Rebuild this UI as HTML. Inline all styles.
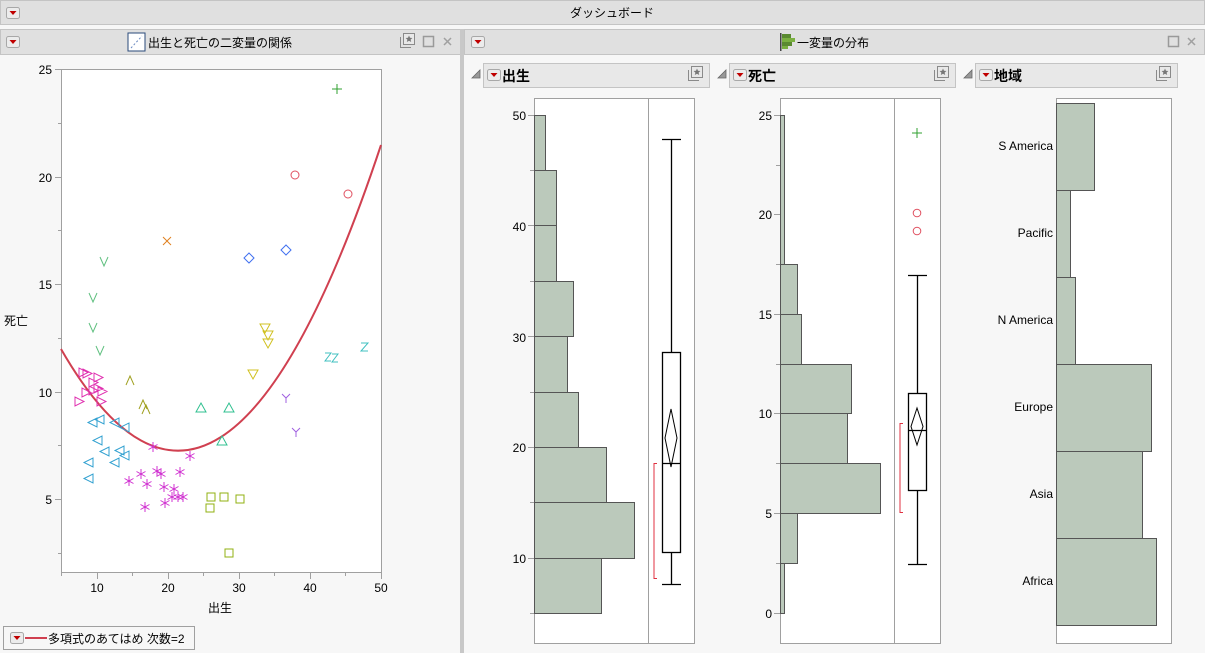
<!DOCTYPE html>
<html><head><meta charset="utf-8"><style>
html,body{margin:0;padding:0;background:#f7f7f7;width:1205px;height:653px;overflow:hidden}
svg{display:block}
text{font-family:"Liberation Sans","Noto Sans CJK JP",sans-serif;font-size:12px;fill:#000}
</style></head><body>
<svg width="1205" height="653" viewBox="0 0 1205 653" xmlns="http://www.w3.org/2000/svg">
<defs>
<g id="dd"><rect x="0.5" y="0.5" width="13" height="11" rx="2" fill="#ececec" stroke="#a8a8a8"/><path d="M3.5 4 L10.5 4 L7 8 Z" fill="#c00000"/></g>
<g id="pin"><rect x="3.5" y="0.5" width="11" height="11" fill="#e8e8e8" stroke="#8a8a8a"/><path d="M0.5 4 V14.5 H11" fill="none" stroke="#8a8a8a"/><path d="M9 2.5 l1 2.3 2.4.2-1.8 1.6.6 2.4-2.2-1.3-2.2 1.3.6-2.4-1.8-1.6 2.4-.2z" fill="#777"/></g>
<path id="tri" d="M0 8 L8 0 L8 8 Z" fill="#999" stroke="#666" stroke-width="0.8"/>
</defs>
<!-- top bar -->
<rect x="0.5" y="0.5" width="1204" height="24" fill="#e0e0e0" stroke="#c4c4c4"/>
<use href="#dd" x="6" y="7"/>
<text x="612" y="17" text-anchor="middle">ダッシュボード</text>
<!-- left panel header -->
<rect x="0.5" y="29.5" width="460" height="25" fill="#e0e0e0" stroke="#c4c4c4"/>
<use href="#dd" x="6" y="36"/>
<rect x="128" y="33" width="17" height="18" fill="#fff" stroke="#2a4a7a"/>
<path d="M131 48 l11-12" stroke="#6a8ac0" stroke-width="1" stroke-dasharray="2 2"/>
<text x="148" y="47">出生と死亡の二変量の関係</text>
<use href="#pin" x="400" y="33"/>
<rect x="423.5" y="36.5" width="10" height="10" fill="none" stroke="#9a9a9a" stroke-width="1.5"/>
<path d="M444 38 l7 7 M451 38 l-7 7" stroke="#a0a0a0" stroke-width="1.5"/>
<!-- splitter -->
<rect x="460" y="29" width="4" height="624" fill="#c8c8c8"/>
<!-- right panel header -->
<rect x="464.5" y="29.5" width="740" height="25" fill="#e0e0e0" stroke="#c4c4c4"/>
<use href="#dd" x="471" y="36"/>
<rect x="780" y="33" width="1.5" height="18" fill="#444"/>
<rect x="782" y="34" width="9" height="4" fill="#5a8a30"/><rect x="782" y="38" width="13" height="4" fill="#7ab040"/><rect x="782" y="42" width="10" height="4" fill="#5a8a30"/><rect x="782" y="46" width="6" height="3" fill="#7ab040"/>
<text x="797" y="47">一変量の分布</text>
<rect x="1168.5" y="36.5" width="10" height="10" fill="none" stroke="#9a9a9a" stroke-width="1.5"/>
<path d="M1188 38 l7 7 M1195 38 l-7 7" stroke="#a0a0a0" stroke-width="1.5"/>

<!-- sub headers -->
<use href="#tri" x="472" y="70"/>
<rect x="483.5" y="63.5" width="226" height="24" fill="#e8e8e8" stroke="#c4c4c4"/>
<use href="#dd" x="487" y="69"/>
<text x="502" y="81" style="font-weight:bold;font-size:14px">出生</text>
<use href="#pin" x="688" y="66"/>
<use href="#tri" x="718" y="70"/>
<rect x="729.5" y="63.5" width="226" height="24" fill="#e8e8e8" stroke="#c4c4c4"/>
<use href="#dd" x="733" y="69"/>
<text x="748" y="81" style="font-weight:bold;font-size:14px">死亡</text>
<use href="#pin" x="934" y="66"/>
<use href="#tri" x="964" y="70"/>
<rect x="975.5" y="63.5" width="202" height="24" fill="#e8e8e8" stroke="#c4c4c4"/>
<use href="#dd" x="979" y="69"/>
<text x="994" y="81" style="font-weight:bold;font-size:14px">地域</text>
<use href="#pin" x="1156" y="66"/>

<!-- scatter plot -->
<rect x="61.5" y="69.5" width="320" height="503" fill="#fff" stroke="#a0a0a0"/>
<g stroke="#a0a0a0">
<path d="M55 69.5h6 M55 177.5h6 M55 284.5h6 M55 392.5h6 M55 499.5h6 M58 123.5h3 M58 230.5h3 M58 338.5h3 M58 445.5h3 M58 553.5h3"/>
<path d="M97.5 573v6 M168.5 573v6 M239.5 573v6 M310.5 573v6 M381.5 573v6 M61.5 573v3 M132.5 573v3 M203.5 573v3 M274.5 573v3 M345.5 573v3"/>
</g>
<g text-anchor="end"><text x="52" y="74">25</text><text x="52" y="182">20</text><text x="52" y="289">15</text><text x="52" y="397">10</text><text x="52" y="504">5</text></g>
<g text-anchor="middle"><text x="97" y="592">10</text><text x="168" y="592">20</text><text x="239" y="592">30</text><text x="310" y="592">40</text><text x="381" y="592">50</text><text x="220" y="612">出生</text></g>
<text x="4" y="325">死亡</text>
<path d="M61 349 Q221 627 381 145" fill="none" stroke="#d04050" stroke-width="2"/>
<g fill="none" stroke-width="1">
<path d="M332 89h10M337 84v10" stroke="#30a030"/>
<circle cx="295" cy="175" r="4" stroke="#e05060"/><circle cx="348" cy="194" r="4" stroke="#e05060"/>
<path d="M163 237l8 8M171 237l-8 8" stroke="#e08020"/>
<path d="M249 253l5 5-5 5-5-5z M286 245l5 5-5 5-5-5z" stroke="#4070f0"/>
<g stroke="#60c080"><path d="M100 257l4 9 4-9M89 293l4 9 4-9M89 323l4 9 4-9M96 346l4 9 4-9"/></g>
<g stroke="#d0c020"><path d="M260 324h10l-5 9z M263 331h10l-5 9z M263 339h10l-5 9z M248 370h10l-5 9z"/></g>
<g stroke="#40c0c0"><path d="M325 353h6l-6 8h6 M332 354h6l-6 8h6 M361 343h7l-7 8h7"/></g>
<g stroke="#a060e0"><path d="M282 394l4 4 4-4M286 398v5 M292 428l4 4 4-4M296 432v5"/></g>
<g stroke="#a0a020"><path d="M126 385l4-9 4 9 M139 409l4-9 4 9 M142 414l4-9 4 9"/></g>
<g stroke="#30c090"><path d="M196 412h10l-5-9z M224 412h10l-5-9z M217 445h10l-5-9z"/></g>
<g stroke="#e030b0"><path d="M79 368v9l9-4.5z M83 369v9l9-4.5z M94 373v9l9-4.5z M89 378v9l9-4.5z M94 384v9l9-4.5z M82 388v9l9-4.5z M89 386v9l9-4.5z M98 387v9l9-4.5z M75 397v9l9-4.5z M97 397v9l9-4.5z"/></g>
<g stroke="#30a0d0"><path d="M97 418v9l-9-4.5z M104 415v9l-9-4.5z M119 418v9l-9-4.5z M129 423v9l-9-4.5z M102 436v9l-9-4.5z M109 447v9l-9-4.5z M124 446v9l-9-4.5z M129 451v9l-9-4.5z M93 458v9l-9-4.5z M119 458v9l-9-4.5z M93 474v9l-9-4.5z"/></g>
<g stroke="#d030d0" id="ast"></g>
<g stroke="#90b010"><path d="M207 493h8v8h-8z M220 493h8v8h-8z M236 495h8v8h-8z M206 504h8v8h-8z M225 549h8v8h-8z"/></g>
</g>
<g stroke="#d030d0" stroke-width="1">
<path d="M153 442v10M148.5 444.5l9 5M148.5 449.5l9-5 M190 451v10M185.5 453.5l9 5M185.5 458.5l9-5 M141 469v10M136.5 471.5l9 5M136.5 476.5l9-5 M157 466v10M152.5 468.5l9 5M152.5 473.5l9-5 M161 469v10M156.5 471.5l9 5M156.5 476.5l9-5 M180 467v10M175.5 469.5l9 5M175.5 474.5l9-5 M129 476v10M124.5 478.5l9 5M124.5 483.5l9-5 M147 479v10M142.5 481.5l9 5M142.5 486.5l9-5 M164 482v10M159.5 484.5l9 5M159.5 489.5l9-5 M174 484v10M169.5 486.5l9 5M169.5 491.5l9-5 M172 492v10M167.5 494.5l9 5M167.5 499.5l9-5 M178 492v10M173.5 494.5l9 5M173.5 499.5l9-5 M183 492v10M178.5 494.5l9 5M178.5 499.5l9-5 M165 498v10M160.5 500.5l9 5M160.5 505.5l9-5 M145 502v10M140.5 504.5l9 5M140.5 509.5l9-5"/>
</g>
<!-- legend -->
<rect x="3.5" y="626.5" width="191" height="23" fill="#f7f7f7" stroke="#a0a0a0"/>
<use href="#dd" x="10" y="632"/>
<path d="M25 638h22" stroke="#d04050" stroke-width="2"/>
<text x="48" y="643">多項式のあてはめ 次数=2</text>

<!-- Birth distribution -->
<rect x="534.5" y="98.5" width="160" height="545" fill="#fff" stroke="#a0a0a0"/>
<path d="M648.5 99v544" stroke="#a0a0a0"/>
<g fill="#bbc9bb" stroke="#555" stroke-width="1">
<rect x="534.5" y="115.5" width="11" height="55"/>
<rect x="534.5" y="170.5" width="22" height="55"/>
<rect x="534.5" y="225.5" width="22" height="56"/>
<rect x="534.5" y="281.5" width="39" height="55"/>
<rect x="534.5" y="336.5" width="33" height="56"/>
<rect x="534.5" y="392.5" width="44" height="55"/>
<rect x="534.5" y="447.5" width="72" height="55"/>
<rect x="534.5" y="502.5" width="100" height="56"/>
<rect x="534.5" y="558.5" width="67" height="55"/>
</g>
<g stroke="#a0a0a0"><path d="M528 115.5h6M530 170.5h4M528 225.5h6M530 281.5h4M528 336.5h6M530 392.5h4M528 447.5h6M530 502.5h4M528 558.5h6M530 613.5h4"/></g>
<g text-anchor="end"><text x="526" y="120">50</text><text x="526" y="231">40</text><text x="526" y="342">30</text><text x="526" y="452">20</text><text x="526" y="563">10</text></g>
<g fill="none" stroke="#000" stroke-width="1.3">
<path d="M671.5 139v213 M671.5 552v32 M662 139.5h19 M662 584.5h19"/>
<rect x="662.5" y="352.5" width="18" height="200"/>
<path d="M662 463.5h19"/>
<path d="M671 409l-6 29 6 29 6-29z" stroke-width="1"/>
</g>
<path d="M657 463.5h-3v115h3" fill="none" stroke="#e03040"/>

<!-- Death distribution -->
<rect x="780.5" y="98.5" width="160" height="545" fill="#fff" stroke="#a0a0a0"/>
<path d="M894.5 99v544" stroke="#a0a0a0"/>
<g fill="#bbc9bb" stroke="#555" stroke-width="1">
<rect x="780.5" y="115.5" width="4" height="149"/>
<rect x="780.5" y="264.5" width="17" height="50"/>
<rect x="780.5" y="314.5" width="21" height="50"/>
<rect x="780.5" y="364.5" width="71" height="49"/>
<rect x="780.5" y="413.5" width="67" height="50"/>
<rect x="780.5" y="463.5" width="100" height="50"/>
<rect x="780.5" y="513.5" width="17" height="50"/>
<rect x="780.5" y="563.5" width="4" height="50"/>
</g>
<g stroke="#a0a0a0"><path d="M774 115.5h6M776 165.5h4M774 214.5h6M776 264.5h4M774 314.5h6M776 364.5h4M774 413.5h6M776 463.5h4M774 513.5h6M776 563.5h4M774 613.5h6"/></g>
<g text-anchor="end"><text x="772" y="120">25</text><text x="772" y="219">20</text><text x="772" y="319">15</text><text x="772" y="418">10</text><text x="772" y="518">5</text><text x="772" y="618">0</text></g>
<path d="M912 133h10M917 128v10" stroke="#30a030" fill="none"/>
<circle cx="917" cy="213" r="3.8" fill="none" stroke="#e05060"/>
<circle cx="917" cy="231" r="3.8" fill="none" stroke="#e05060"/>
<g fill="none" stroke="#000" stroke-width="1.3">
<path d="M917.5 276v117 M917.5 490v74 M908 275.5h19 M908 564.5h19"/>
<rect x="908.5" y="393.5" width="18" height="97"/>
<path d="M908 430.5h19"/>
<path d="M917 408l-6 18.5 6 18.5 6-18.5z" stroke-width="1"/>
</g>
<path d="M903 423.5h-3v89h3" fill="none" stroke="#e03040"/>

<!-- Region -->
<rect x="1056.5" y="98.5" width="115" height="545" fill="#fff" stroke="#a0a0a0"/>
<g fill="#bbc9bb" stroke="#555" stroke-width="1">
<rect x="1056.5" y="103.5" width="38" height="87"/>
<rect x="1056.5" y="190.5" width="14" height="87"/>
<rect x="1056.5" y="277.5" width="19" height="87"/>
<rect x="1056.5" y="364.5" width="95" height="87"/>
<rect x="1056.5" y="451.5" width="86" height="87"/>
<rect x="1056.5" y="538.5" width="100" height="87"/>
</g>
<g text-anchor="end"><text x="1053" y="150">S America</text><text x="1053" y="237">Pacific</text><text x="1053" y="324">N America</text><text x="1053" y="411">Europe</text><text x="1053" y="498">Asia</text><text x="1053" y="585">Africa</text></g>
</svg>
</body></html>
